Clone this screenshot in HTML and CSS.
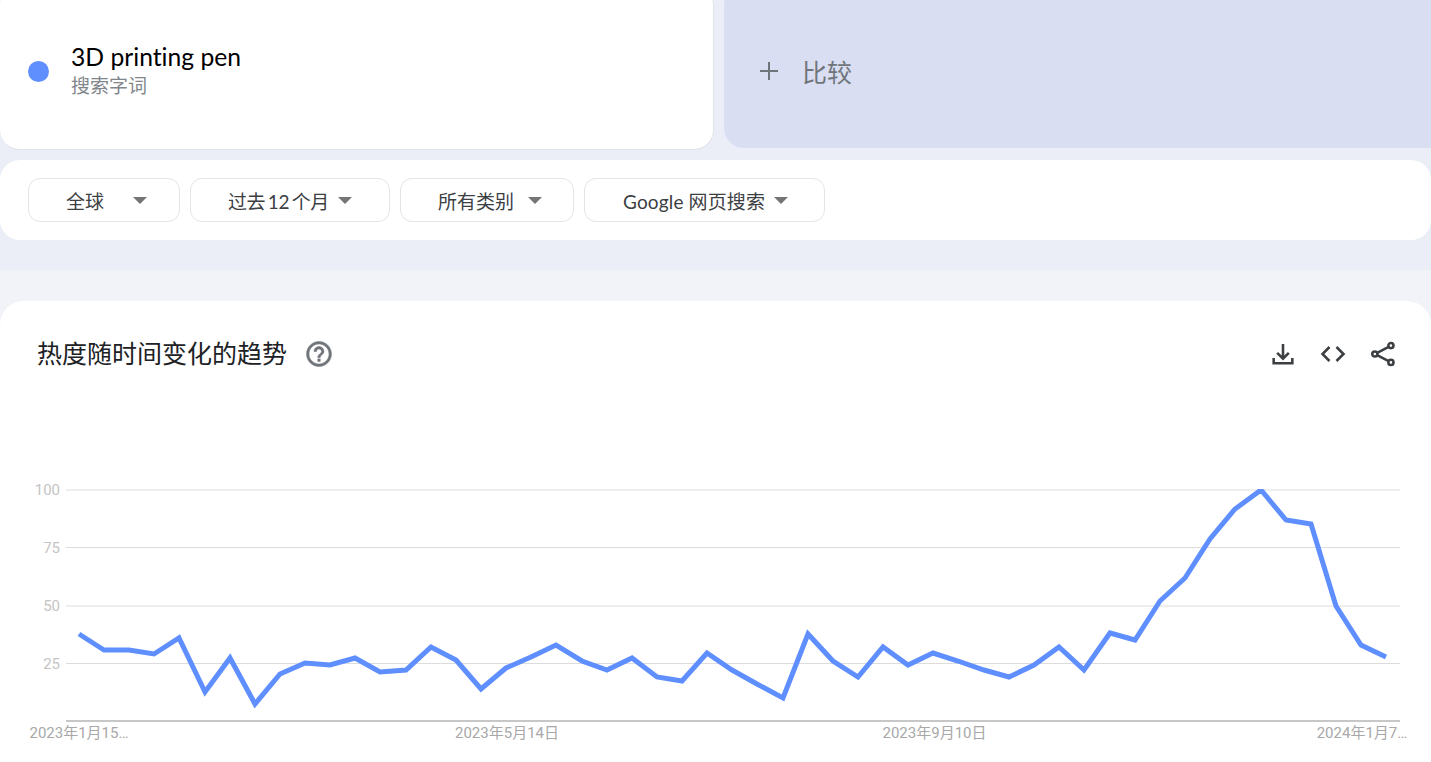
FILE: index.html
```html
<!DOCTYPE html>
<html lang="zh-CN">
<head>
<meta charset="utf-8">
<title>热度随时间变化的趋势</title>
<link rel="stylesheet" href="styles.css">
</head>
<body>
<div class="head">
  <div class="terms">
    <div class="term">
      <span class="dot"></span>
      <div class="term-text">
        <div class="term-name">3D printing pen</div>
        <div class="term-type">搜索字词</div>
      </div>
    </div>
    <div class="compare">
      <svg class="plus" viewBox="0 0 18 18"><path d="M9 0v18M0 9h18"/></svg>
      <span>比较</span>
    </div>
  </div>
  <div class="filters">
    <div class="chip chip-a"><span>全球</span><i class="caret"></i></div>
    <div class="chip chip-b"><span>过去 12 个月</span><i class="caret"></i></div>
    <div class="chip chip-c"><span>所有类别</span><i class="caret"></i></div>
    <div class="chip chip-d"><span>Google 网页搜索</span><i class="caret"></i></div>
  </div>
</div>
<div class="main">
  <section class="card">
    <div class="card-head">
      <h2>热度随时间变化的趋势</h2>
      <svg class="help" viewBox="0 0 24 24"><path d="M11 18h2v-2h-2v2zm1-16C6.48 2 2 6.48 2 12s4.48 10 10 10 10-4.48 10-10S17.52 2 12 2zm0 18c-4.41 0-8-3.59-8-8s3.59-8 8-8 8 3.59 8 8-3.59 8-8 8zm0-14c-2.21 0-4 1.79-4 4h2c0-1.1.9-2 2-2s2 .9 2 2c0 2-3 1.75-3 5h2c0-2.25 3-2.5 3-5 0-2.21-1.79-4-4-4z"/></svg>
      <div class="tools">
        <svg viewBox="0 0 24 24"><path d="M4 15.500v4.500h16v-4.500M12 3.500v12.500M7 11l5 5 5-5"/></svg>
        <svg viewBox="0 0 24 24"><path d="M9 6 3 12l6 6M15 6l6 6-6 6"/></svg>
        <svg viewBox="0 0 24 24"><circle cx="18.800" cy="4.800" r="2.200"/><circle cx="18.800" cy="19.200" r="2.200"/><circle cx="5" cy="12" r="2.200"/><path d="m7 11 9.800-5.100M7 13l9.800 5.100"/></svg>
      </div>
    </div>
    <svg class="chart" viewBox="0 46 1431 350" width="1431" height="350">
      <defs>
        <clipPath id="plot"><rect x="60" y="129" width="1345" height="235"/></clipPath>
      </defs>
      <g class="grid">
        <path d="M66 130H1400M66 187.500H1400M66 246H1400M66 303.500H1400"/>
      </g>
      <path class="axis" d="M66 361H1400"/>
      <g class="ylab">
        <text x="60" y="135">100</text>
        <text x="60" y="193">75</text>
        <text x="60" y="251">50</text>
        <text x="60" y="309">25</text>
      </g>
      <g clip-path="url(#plot)">
        <polyline class="line" points="79,274 104,290 129,290 154,294 179,278 205,332 230,298 255,344 280,314 305,303 330,305 355,298 380,312 406,310 431,287 456,300 481,329 506,308 531,297 556,285 582,301 607,310 632,298 657,317 682,321 707,293 732,310 757,324 783,338 808,274 833,301 858,317 883,287 908,305 933,293 958,301 984,310 1009,317 1034,305 1059,287 1084,310 1110,273 1135,280 1160,241 1185,218 1210,179 1235,149 1261,130 1286,160 1311,164 1336,246 1361,285 1386,297"/>
      </g>
      <g class="xlab">
        <text x="79" y="378">2023年1月15…</text>
        <text x="507" y="378">2023年5月14日</text>
        <text x="934.500" y="378">2023年9月10日</text>
        <text x="1362" y="378">2024年1月7…</text>
      </g>
    </svg>
  </section>
</div>
</body>
</html>
```
FILE: styles.css
```css
* { box-sizing: border-box; }
html, body { margin: 0; height: 100%; }
body {
  overflow: hidden;
  background: #f2f3f8;
  font-family: "Noto Sans", "Noto Sans CJK SC", sans-serif;
}
.head {
  height: 270px;
  background: #ebeef7;
  padding-top: 0.02px;
}
.terms {
  display: flex;
  height: 164px;
  margin-top: -15px;
  gap: 10px;
}
.term {
  width: 714px;
  height: 165px;
  flex: none;
  display: flex;
  align-items: center;
  gap: 22px;
  padding: 8px 0 0 28px;
  background: #fff;
  border-right: 1px solid #e3e4ea;
  border-bottom: 1px solid #e3e4ea;
  border-radius: 20px;
}
.dot {
  width: 21px;
  height: 21px;
  border-radius: 50%;
  background: #5f8fff;
}
.term-text { margin-top: -1px; }
.term-name {
  font-family: "Lato", "Noto Sans CJK SC", sans-serif;
  font-variant-ligatures: none;
  font-size: 24.700px;
  line-height: 30px;
  color: #000;
}
.term-type {
  font-size: 19px;
  line-height: 28px;
  color: #80868b;
}
.compare {
  flex: 1;
  height: 163px;
  display: flex;
  align-items: center;
  gap: 24px;
  padding: 9px 0 0 36px;
  background: #d9def3;
  border-radius: 20px 0 0 20px;
  font-size: 25px;
  color: #70757a;
}
.plus {
  width: 18px;
  height: 18px;
  fill: none;
  stroke: #70757a;
  stroke-width: 2;
}
.filters {
  margin-top: 11px;
  height: 80px;
  display: flex;
  align-items: center;
  gap: 10px;
  padding: 0 28px;
  background: #fff;
  border-radius: 20px;
}
.chip {
  height: 44px;
  display: flex;
  align-items: center;
  justify-content: space-between;
  padding: 0 32px 0 37px;
  background: #fff;
  border: 1px solid #e3e4ea;
  border-radius: 12px;
  font-family: "Lato", "Noto Sans CJK SC", sans-serif;
  font-size: 19px;
  color: #3c4043;
}
.chip-a { width: 152px; }
.chip-b { width: 200px; padding-right: 37px; word-spacing: -1.500px; letter-spacing: -0.500px; }
.chip-c { width: 174px; padding-right: 31px; }
.chip-d { width: 241px; padding: 0 36px 0 38px; letter-spacing: 0.150px; }
.caret {
  width: 0;
  height: 0;
  border-left: 7px solid transparent;
  border-right: 7px solid transparent;
  border-top: 7px solid #757575;
}
.main { padding-top: 31px; }
.card {
  height: 461px;
  background: #fff;
  border-radius: 24px 24px 0 0;
}
.card-head {
  height: 105px;
  display: flex;
  align-items: center;
  padding: 0 34px 0 37px;
}
.card-head h2 {
  margin: 0 17px 0 0;
  font-size: 25px;
  font-weight: 400;
  color: #202124;
  line-height: 1;
}
.help {
  width: 30px;
  height: 30px;
  fill: #70757a;
  stroke: #70757a;
  stroke-width: 0.4;
}
.tools {
  margin-left: auto;
  display: flex;
  gap: 22px;
}
.tools svg {
  width: 28px;
  height: 28px;
  fill: none;
  stroke: #3c4043;
  stroke-width: 2.200;
}
.chart { display: block; }
.grid path { stroke: #dcdcdc; stroke-width: 1; fill: none; }
.axis { stroke: #b4b4b4; stroke-width: 1.500; fill: none; }
.line {
  fill: none;
  stroke: #5f8fff;
  stroke-width: 5;
  stroke-linejoin: miter;
}
.ylab text, .xlab text {
  font-family: "Roboto", "Noto Sans CJK SC", sans-serif;
  font-size: 15px;
}
.ylab text { fill: #c4c4c4; text-anchor: end; }
.xlab text { fill: #a8a8a8; text-anchor: middle; }
```
